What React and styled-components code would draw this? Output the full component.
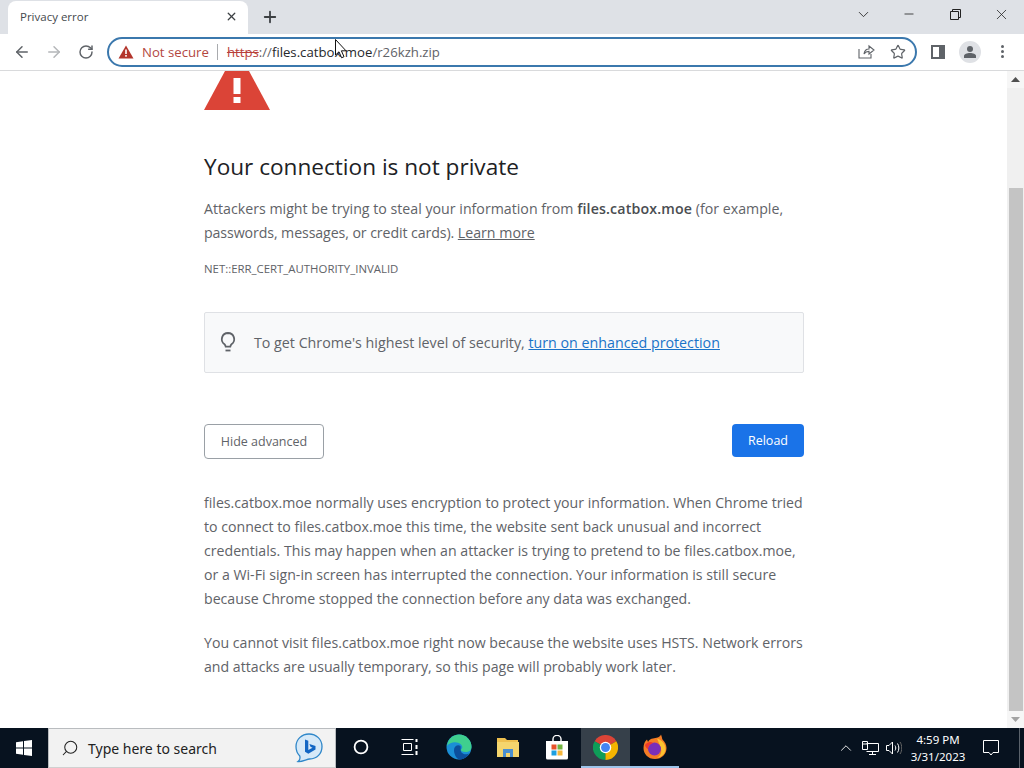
import styled, { createGlobalStyle } from "styled-components";
import { X, Plus, ArrowLeft, ArrowRight, RotateCw, ChevronDown, Minus, Star, Search, ChevronUp } from "lucide-react";

const GlobalStyle = createGlobalStyle`
  html, body { margin: 0; padding: 0; width: 1024px; height: 768px; overflow: hidden; background: #fff; }
  * { box-sizing: border-box; }
  body { font-family: "Open Sans", "Noto Sans", "Liberation Sans", sans-serif; }
`;

const Screen = styled.div`
  position: relative;
  width: 1024px;
  height: 768px;
  display: flex;
  flex-direction: column;
  overflow: hidden;
`;

const TabStrip = styled.div`
  height: 34px;
  background: #dee1e6;
  display: flex;
  align-items: stretch;
  padding-left: 8px;
`;

const Tab = styled.div`
  width: 240px;
  background: #fff;
  margin-top: 1px;
  border-radius: 8px 8px 0 0;
  display: flex;
  align-items: center;
  justify-content: space-between;
  padding: 0 10px 2px 12px;
  font-size: 11.5px;
  color: #45494d;
`;

const NewTab = styled.div`
  width: 43px;
  display: flex;
  align-items: center;
  justify-content: center;
  color: #3c4043;
`;

const WindowControls = styled.div`
  margin-left: auto;
  display: flex;
  align-items: center;
  color: #222;
  padding-bottom: 6px;
`;

const WindowButton = styled.div`
  width: 46px;
  display: flex;
  justify-content: center;
`;

const Toolbar = styled.div`
  height: 37px;
  background: #fff;
  border-bottom: 1px solid #d9dadc;
  display: flex;
  align-items: center;
  padding: 0 0 1px 6px;
`;

const NavButton = styled.div`
  width: 32px;
  display: flex;
  justify-content: center;
  color: ${(p) => (p.$off ? "#b4b6b9" : "#5f6368")};
`;

const Omnibox = styled.div`
  width: 810px;
  height: 30px;
  margin-left: 5px;
  border: 2px solid #3b78ad;
  border-radius: 15px;
  display: flex;
  align-items: center;
  padding: 0 9px;
  font-size: 13.2px;
  white-space: nowrap;
  color: #5f6368;
`;

const NotSecure = styled.span`
  color: #b3473f;
  margin-left: 8px;
  padding-right: 8px;
  border-right: 1px solid #a9abae;
  line-height: 16px;
`;

const Strike = styled.span`
  color: #b9403a;
  margin-left: 9px;
  text-decoration: line-through;
`;

const Host = styled.span`
  color: #26282b;
`;

const OmniIcons = styled.div`
  margin-left: auto;
  display: flex;
  align-items: center;
  gap: 15px;
  color: #5f6368;
`;

const ToolIcons = styled.div`
  display: flex;
  align-items: center;
  margin-left: 14px;
  gap: 14px;
  color: #5f6368;
`;

const Avatar = styled.div`
  width: 22px;
  height: 22px;
  border-radius: 50%;
  background: #dfe1e5;
  display: flex;
  align-items: center;
  justify-content: center;
`;

const Dots = styled.div`
  display: flex;
  flex-direction: column;
  gap: 2px;
  margin-left: 6px;
  span {
    width: 3px;
    height: 3px;
    border-radius: 50%;
    background: #5f6368;
  }
`;

const Body = styled.div`
  flex: 1;
  display: flex;
  min-height: 0;
`;

const Page = styled.main`
  flex: 1;
  background: #fff;
  padding-left: 204px;
  overflow: hidden;
`;

const Column = styled.div`
  width: 600px;
  display: flex;
  flex-direction: column;
  color: #5f6368;
  font-size: 14.2px;
  line-height: 24px;
`;

const Heading = styled.h1`
  margin: 40px 0 0;
  font-size: 22.6px;
  line-height: 34px;
  font-weight: 400;
  color: #202124;
`;

const Paragraph = styled.p`
  margin: ${(p) => p.$top || 0}px 0 0;
  font-size: ${(p) => p.$size || 14.2}px;
  strong { font-weight: 600; letter-spacing: 0.15px; color: #4a4d51; }
`;

const Tight = styled.span`
  letter-spacing: -0.1px;
`;

const Link = styled.a`
  color: ${(p) => (p.$blue ? "#1a73c8" : "#5f6368")};
  text-decoration: underline;
`;

const ErrorCode = styled.div`
  margin-top: 12px;
  font-size: 11.4px;
  line-height: 24px;
  color: #5f6368;
`;

const Notice = styled.div`
  margin-top: 31px;
  height: 61px;
  background: #f8f9fa;
  border: 1px solid #dfe1e5;
  border-radius: 2px;
  display: flex;
  align-items: center;
  padding-left: 13px;
  gap: 16px;
  font-size: 14.25px;
`;

const Buttons = styled.div`
  margin-top: 51px;
  display: flex;
  justify-content: space-between;
  align-items: flex-start;
`;

const Button = styled.div`
  height: ${(p) => (p.$primary ? 33 : 35)}px;
  width: ${(p) => (p.$primary ? 72 : 120)}px;
  display: flex;
  align-items: center;
  justify-content: center;
  border-radius: 4px;
  font-size: 12.5px;
  background: ${(p) => (p.$primary ? "#1a73e8" : "#fff")};
  color: ${(p) => (p.$primary ? "#fff" : "#5f6368")};
  border: ${(p) => (p.$primary ? "none" : "1px solid #9aa0a6")};
`;

const Scrollbar = styled.div`
  width: 17px;
  background: #f0f0f0;
  display: flex;
  flex-direction: column;
  align-items: center;
  justify-content: space-between;
`;

const ScrollArrow = styled.div`
  width: 100%;
  height: 17px;
  display: flex;
  align-items: center;
  justify-content: center;
  background: #f6f6f6;
`;

const Thumb = styled.div`
  width: 14px;
  flex: 1;
  margin: 100px 0 0 1px;
  background: #c4c4c4;
`;

const Taskbar = styled.footer`
  height: 40px;
  background: #07121f;
  display: flex;
  align-items: stretch;
  color: #fff;
`;

const StartButton = styled.div`
  width: 48px;
  display: flex;
  align-items: center;
  justify-content: center;
`;

const SearchBox = styled.div`
  width: 288px;
  background: #f2f2f2;
  border: 1px solid #b9bcbf;
  border-bottom-color: #d0d0d0;
  display: flex;
  align-items: center;
  color: #222;
  padding-left: 12px;
  font-size: 14px;
  font-family: "Noto Sans", "Open Sans", sans-serif;
  span { margin-left: 9px; }
  svg:last-child { margin-left: auto; margin-right: 11px; }
`;

const TaskIcon = styled.div`
  width: 49px;
  display: flex;
  align-items: center;
  justify-content: center;
  background: ${(p) => (p.$active ? "#36404a" : "transparent")};
  border-bottom: 2px solid ${(p) => (p.$open ? "#9dc4ea" : "transparent")};
`;

const Tray = styled.div`
  margin-left: auto;
  display: flex;
  align-items: center;
`;

const Clock = styled.div`
  width: 72px;
  text-align: center;
  font-size: 11.5px;
  line-height: 17px;
  margin-right: 9px;
  font-family: "Noto Sans", "Open Sans", sans-serif;
`;

const TrayGroup = styled.div`
  display: flex;
  align-items: center;
  gap: 7px;
`;

const ShowDesktop = styled.div`
  width: 5px;
  height: 100%;
  margin-left: 20px;
  border-left: 1px solid #5a626b;
`;

const Pointer = styled.svg`
  position: absolute;
  left: 335px;
  top: 39px;
`;

const WarningSmall = () => (
  <svg width="16" height="14" viewBox="0 0 16 14">
    <path d="M8 0.5 L15.5 13.5 H0.5 Z" fill="#b3352c" />
    <rect x="7.2" y="4.5" width="1.6" height="4.5" fill="#fff" />
    <rect x="7.2" y="10" width="1.6" height="1.7" fill="#fff" />
  </svg>
);

const WarningLarge = () => (
  <svg width="66" height="39" viewBox="0 0 66 39" style={{ display: "block" }}>
    <path d="M21 0 H45 L66 39 H0 Z" fill="#db4437" />
    <rect x="29.5" y="7" width="7" height="16" fill="#fff" />
    <rect x="29.5" y="26" width="7" height="6" fill="#fff" />
  </svg>
);

const BulbIcon = () => (
  <svg width="20" height="24" viewBox="0 0 20 24" fill="none" stroke="#5f6368" strokeWidth="1.8">
    <path d="M10 2 a6.2 6.2 0 0 0-3.5 11.3 c.8.6 1 1.3 1.2 2.4 h4.6 c.2-1.1.4-1.8 1.2-2.4 A6.2 6.2 0 0 0 10 2 Z" />
    <path d="M7.5 19.5 h5" />
  </svg>
);

const ShareIcon = () => (
  <svg width="17" height="15" viewBox="0 0 17 15" fill="none" stroke="#5f6368" strokeWidth="1.1">
    <path d="M1 5 V14 H13 V10" />
    <path d="M6 10 C6.5 6.5 9 5 11 5 V2 L16 6 L11 10 V7.4 C9 7.4 7.2 8.2 6 10 Z" />
  </svg>
);

const SidePanelIcon = () => (
  <svg width="14" height="14" viewBox="0 0 14 14">
    <path d="M0 0 H14 V14 H0 Z M2 2 V12 H8 V2 Z" fill="#5f6368" fillRule="evenodd" />
  </svg>
);

const PersonIcon = () => (
  <svg width="14" height="12" viewBox="0 0 14 12" fill="#5f6368">
    <circle cx="7" cy="3" r="3" />
    <path d="M1 12 V10 C1 8 4 7 7 7 C10 7 13 8 13 10 V12 Z" />
  </svg>
);

const RestoreIcon = () => (
  <svg width="11" height="11" viewBox="0 0 11 11" fill="none" stroke="#222">
    <path d="M.5 2.5 H8.5 V10.5 H.5 Z" />
    <path d="M2.5 2.5 V.5 H10.5 V8.5 H8.5" />
  </svg>
);

const WindowsLogo = () => (
  <svg width="16" height="16" viewBox="0 0 16 16" fill="#fff">
    <path d="M0 2.2 L7 1.2 V7.4 H0 Z M8 1.1 L16 0 V7.4 H8 Z M0 8.4 H7 V14.8 L0 13.8 Z M8 8.4 H16 V16 L8 14.9 Z" />
  </svg>
);

const BingIcon = () => (
  <svg width="30" height="32" viewBox="0 0 30 32">
    <path d="M15 2 C22.5 2 28 7.5 28 14.5 C28 21.5 23 27 15.5 27 C13 27 8 30 4 29.5 C6 28 6.3 26 5.8 24 C3.2 21.5 2 18 2 14.5 C2 7.5 7.5 2 15 2 Z" fill="#d6e9f8" stroke="#2f87c9" strokeWidth="1.3" />
    <path d="M11 7.5 L14.3 8.7 V18 L18.5 15.8 L16.5 14.8 L15.4 12 L21.5 14 V17.5 L14.3 21.7 L11 19.8 Z" fill="#1266c4" />
  </svg>
);

const CortanaIcon = () => (
  <svg width="16" height="16" viewBox="0 0 16 16" fill="none" stroke="#fff" strokeWidth="1.8">
    <circle cx="8" cy="8" r="6.4" />
  </svg>
);

const TaskViewIcon = () => (
  <svg width="17" height="16" viewBox="0 0 17 16" fill="none" stroke="#fff" strokeWidth="1">
    <path d="M.5 .5 H12.5 M.5 15.5 H12.5 M2.5 4.5 H10.5 V11.5 H2.5 Z" />
    <path d="M15.5 0 V3 M15.5 6 V10 M15.5 12 V16" strokeWidth="2" />
  </svg>
);

const EdgeIcon = () => (
  <svg width="26" height="26" viewBox="0 0 26 26">
    <circle cx="13" cy="13" r="12.5" fill="#1b8fd6" />
    <path d="M1 12 C2 4 8 .5 13 .5 C20 .5 25.5 6 25.5 13 C25.5 16 23 18 19.5 18 C16.5 18 14.5 17 15 15.5 C16.5 14.5 17 12.5 15 10.5 C11 7 4 8 1 12 Z" fill="#3fcf8e" />
    <path d="M8 16 C8 12 12 10 14.5 12 C15 14 14 16.5 15.5 18.5 C18 21 21.5 20.5 23 19.5 C21 23.5 17 25.5 13 25.5 C10 24 8 20 8 16 Z" fill="#0c4f9c" />
  </svg>
);

const FolderIcon = () => (
  <svg width="22" height="20" viewBox="0 0 22 20">
    <path d="M0 1 H8 L10 3 H21 V19 H0 Z" fill="#eec04f" />
    <path d="M0 5 H22 V20 H0 Z" fill="#f4d56d" />
    <path d="M6 12 H16 V20 H13 V16 H9 V20 H6 Z" fill="#4a8fd0" />
  </svg>
);

const StoreIcon = () => (
  <svg width="24" height="25" viewBox="0 0 24 25">
    <path d="M8 6 V4 A4 3.6 0 0 1 16 4 V6" fill="none" stroke="#fff" strokeWidth="1.4" />
    <path d="M1 6 H23 V23 A1.5 1.5 0 0 1 21.5 24.5 H2.5 A1.5 1.5 0 0 1 1 23 Z" fill="#fff" />
    <rect x="6.5" y="9.5" width="5" height="5" fill="#e8532b" />
    <rect x="12.5" y="9.5" width="5" height="5" fill="#71b340" />
    <rect x="6.5" y="15.5" width="5" height="5" fill="#1d9fe0" />
    <rect x="12.5" y="15.5" width="5" height="5" fill="#f6b73c" />
  </svg>
);

const ChromeIcon = () => (
  <svg width="25" height="25" viewBox="0 0 48 48">
    <path d="M24 24 L44.8 12 A24 24 0 0 0 3.2 12 Z" fill="#db4437" />
    <path d="M24 24 L3.2 12 A24 24 0 0 0 24 48 Z" fill="#0f9d58" />
    <path d="M24 24 L24 48 A24 24 0 0 0 44.8 12 Z" fill="#f4b400" />
    <circle cx="24" cy="24" r="11" fill="#fff" />
    <circle cx="24" cy="24" r="8.6" fill="#4285f4" />
  </svg>
);

const FirefoxIcon = () => (
  <svg width="24" height="26" viewBox="0 0 24 26">
    <path d="M12 25 C5 25 0.5 20 0.5 14 C0.5 10 2 7 4 5.5 L5 8 C6 6 8 4.5 10 4.5 C13 4 17 3.5 18 0.5 C19 3 19 4.5 19.5 5.5 C22 8 23.5 11 23.5 14 C23.5 20 19 25 12 25 Z" fill="#f57c25" />
    <path d="M14 4.5 C18 5.5 22 9 22.5 14 C23 18 20 23 14 24 C19 21 19 16 17 12 C16 9 15 6.5 14 4.5 Z" fill="#fcc22f" />
    <circle cx="11.5" cy="15" r="6.5" fill="#7a2fb8" />
    <path d="M2 11 C4 8 8 7 10 9 C7 10 5 12 5 15 C3.5 14.5 2.5 13 2 11 Z" fill="#f0392b" />
  </svg>
);

const NetworkIcon = () => (
  <svg width="17" height="14" viewBox="0 0 17 14" fill="none" stroke="#fff">
    <path d="M4.5 2.5 H16.5 V10.5 H4.5 M10.5 10.5 V13.5 M7 13.5 H14" />
    <path d="M.5 .5 H5.5 V8.5 H.5 Z M.5 3 H5.5" />
  </svg>
);

const VolumeIcon = () => (
  <svg width="16" height="14" viewBox="0 0 16 14" fill="none" stroke="#fff">
    <path d="M.5 4.5 H3 L6.5 1 V13 L3 9.5 H.5 Z" />
    <path d="M9 4.5 C10 6 10 8 9 9.5 M11.5 2.5 C13.3 5 13.3 9 11.5 11.5" />
    <path d="M14 1 C16.3 4 16.3 10 14 13" stroke="#666" />
  </svg>
);

const NotifyIcon = () => (
  <svg width="16" height="16" viewBox="0 0 16 16" fill="none" stroke="#fff">
    <path d="M.5 .5 H15.5 V12.5 H10 L8 15 L6 12.5 H.5 Z" />
  </svg>
);

const CursorIcon = () => (
  <Pointer width="12" height="20" viewBox="0 0 12 20">
    <path d="M.5 .5 V16 L4 12.8 L6.6 18.8 L9 17.7 L6.4 11.8 H11 Z" fill="#fff" stroke="#111" strokeWidth="1" />
  </Pointer>
);

export default function App() {
  return (
    <Screen>
      <GlobalStyle />
      <TabStrip>
        <Tab>
          Privacy error
          <X size={13} strokeWidth={2.4} color="#3c4043" />
        </Tab>
        <NewTab>
          <Plus size={18} strokeWidth={2.4} />
        </NewTab>
        <WindowControls>
          <WindowButton><ChevronDown size={17} strokeWidth={1.2} /></WindowButton>
          <WindowButton><Minus size={14} strokeWidth={1.4} /></WindowButton>
          <WindowButton><RestoreIcon /></WindowButton>
          <WindowButton><X size={17} strokeWidth={1.1} /></WindowButton>
        </WindowControls>
      </TabStrip>
      <Toolbar>
        <NavButton><ArrowLeft size={18} strokeWidth={2} /></NavButton>
        <NavButton $off><ArrowRight size={18} strokeWidth={2} /></NavButton>
        <NavButton><RotateCw size={16} strokeWidth={2.2} /></NavButton>
        <Omnibox>
          <WarningSmall />
          <NotSecure>Not secure</NotSecure>
          <Strike>https</Strike>
          <span>://</span>
          <Host>files.catbox.moe</Host>
          <span>/r26kzh.zip</span>
          <OmniIcons>
            <ShareIcon />
            <Star size={16} strokeWidth={1.8} />
          </OmniIcons>
        </Omnibox>
        <ToolIcons>
          <SidePanelIcon />
          <Avatar><PersonIcon /></Avatar>
          <Dots><span /><span /><span /></Dots>
        </ToolIcons>
      </Toolbar>
      <Body>
        <Page>
          <Column>
            <WarningLarge />
            <Heading>Your connection is not private</Heading>
            <Paragraph $top={13}>
              Attackers might be trying to steal your information from <strong>files.catbox.moe</strong> (for example, <Tight>passwords, messages, or credit cards).</Tight> <Link>Learn more</Link>
            </Paragraph>
            <ErrorCode>NET::ERR_CERT_AUTHORITY_INVALID</ErrorCode>
            <Notice>
              <BulbIcon />
              <span>To get Chrome's highest level of security, <Link $blue>turn on enhanced protection</Link></span>
            </Notice>
            <Buttons>
              <Button>Hide advanced</Button>
              <Button $primary>Reload</Button>
            </Buttons>
            <Paragraph $top={32} $size={14.15}>
              files.catbox.moe normally uses encryption to protect your information. When Chrome tried to connect to files.catbox.moe this time, the website sent back unusual and incorrect credentials. This may happen when an attacker is trying to pretend to be files.catbox.moe, or a Wi-Fi sign-in screen has interrupted the connection. Your information is still secure because Chrome stopped the connection before any data was exchanged.
            </Paragraph>
            <Paragraph $top={20} $size={14.15}>
              You cannot visit files.catbox.moe right now because the website uses HSTS. Network errors and attacks are usually temporary, so this page will probably work later.
            </Paragraph>
          </Column>
        </Page>
        <Scrollbar>
          <ScrollArrow><svg width="9" height="5" viewBox="0 0 9 5"><path d="M4.5 0 L9 5 H0 Z" fill="#505050" /></svg></ScrollArrow>
          <Thumb />
          <ScrollArrow><svg width="9" height="5" viewBox="0 0 9 5"><path d="M4.5 5 L9 0 H0 Z" fill="#a3a3a3" /></svg></ScrollArrow>
        </Scrollbar>
      </Body>
      <Taskbar>
        <StartButton><WindowsLogo /></StartButton>
        <SearchBox>
          <Search size={18} strokeWidth={1.4} style={{ transform: "scaleX(-1)" }} />
          <span>Type here to search</span>
          <BingIcon />
        </SearchBox>
        <TaskIcon><CortanaIcon /></TaskIcon>
        <TaskIcon><TaskViewIcon /></TaskIcon>
        <TaskIcon><EdgeIcon /></TaskIcon>
        <TaskIcon><FolderIcon /></TaskIcon>
        <TaskIcon><StoreIcon /></TaskIcon>
        <TaskIcon $active $open><ChromeIcon /></TaskIcon>
        <TaskIcon $open><FirefoxIcon /></TaskIcon>
        <Tray>
          <TrayGroup>
            <ChevronUp size={18} strokeWidth={1.2} />
            <NetworkIcon />
            <VolumeIcon />
          </TrayGroup>
          <Clock>4:59 PM<br />3/31/2023</Clock>
          <NotifyIcon />
          <ShowDesktop />
        </Tray>
      </Taskbar>
      <CursorIcon />
    </Screen>
  );
}
